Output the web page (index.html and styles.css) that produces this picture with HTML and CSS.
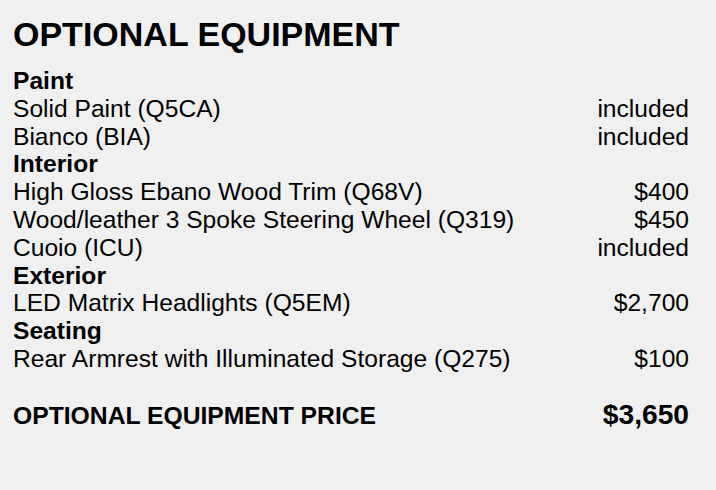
FILE: index.html
```html
<!DOCTYPE html>
<html>
<head>
<meta charset="utf-8">
<link rel="stylesheet" href="styles.css">
</head>
<body>
<div class="page">
  <h1 class="title">OPTIONAL EQUIPMENT</h1>
  <div class="list">
    <div class="group">Paint</div>
    <div class="row"><span>Solid Paint (Q5CA)</span><span>included</span></div>
    <div class="row"><span>Bianco (BIA)</span><span>included</span></div>
    <div class="group">Interior</div>
    <div class="row"><span>High Gloss Ebano Wood Trim (Q68V)</span><span>$400</span></div>
    <div class="row"><span>Wood/leather 3 Spoke Steering Wheel (Q319)</span><span>$450</span></div>
    <div class="row"><span>Cuoio (ICU)</span><span>included</span></div>
    <div class="group">Exterior</div>
    <div class="row"><span>LED Matrix Headlights (Q5EM)</span><span>$2,700</span></div>
    <div class="group">Seating</div>
    <div class="row"><span>Rear Armrest with Illuminated Storage (Q275)</span><span>$100</span></div>
  </div>
  <div class="total">
    <span class="total-label">OPTIONAL EQUIPMENT PRICE</span>
    <span class="total-value">$3,650</span>
  </div>
</div>
</body>
</html>
```
FILE: styles.css
```css
html, body {
  margin: 0;
  padding: 0;
  background: #f0f0f0;
}
body {
  font-family: "Liberation Sans", Arial, sans-serif;
  color: #000;
}
.page {
  padding: 15px 27px 0 13px;
}
.title {
  margin: 0 0 14px 0;
  font-size: 34px;
  font-weight: bold;
  line-height: 38px;
}
.list {
  font-size: 24.6px;
  line-height: 27.8px;
}
.group {
  font-weight: bold;
}
.row {
  display: flex;
  justify-content: space-between;
}
.total {
  margin-top: 25px;
  display: flex;
  justify-content: space-between;
  align-items: baseline;
  font-weight: bold;
}
.total-label {
  font-size: 24.7px;
}
.total-value {
  font-size: 28.2px;
  line-height: 32px;
}
```
